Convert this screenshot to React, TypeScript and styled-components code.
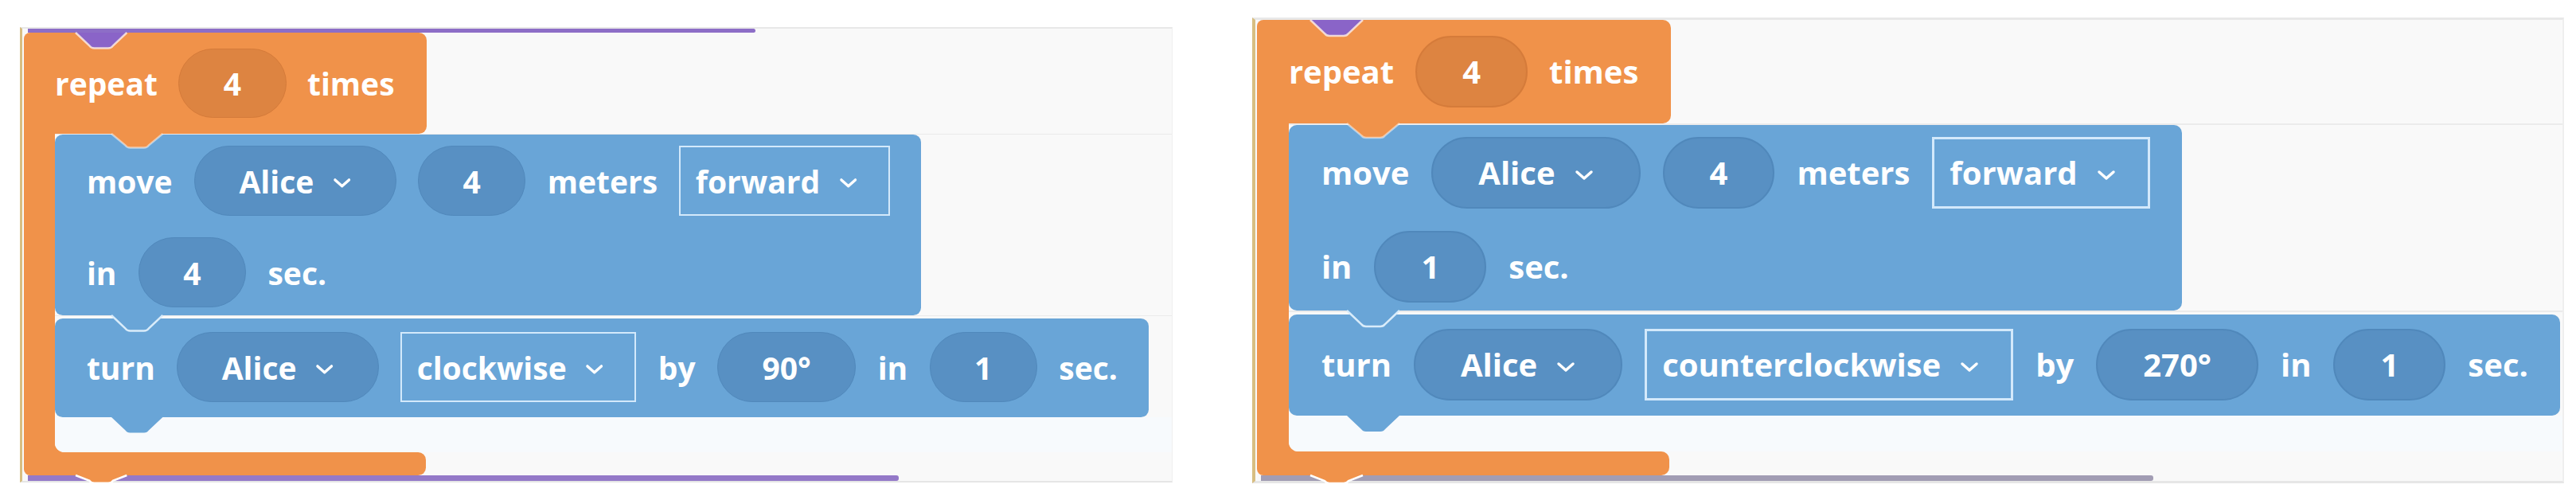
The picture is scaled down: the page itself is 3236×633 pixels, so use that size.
import React from 'react';
import styled, { createGlobalStyle } from 'styled-components';

const ORANGE = '#f0924a';
const ORANGE_DARK = '#dd8441';
const BLUE = '#69a5d7';
const BLUE_DARK = '#5890c3';
const PANEL_BG = '#f9f9f9';

const GlobalStyle = createGlobalStyle`
  html, body {
    margin: 0;
    padding: 0;
    background: #ffffff;
  }
  body {
    font-family: 'Open Sans', 'Noto Sans', sans-serif;
  }
`;

const Page = styled.div`
  display: flex;
  align-items: flex-start;
  gap: 100px;
  width: 3236px;
  height: 633px;
  padding-left: 25px;
  box-sizing: border-box;
  overflow: hidden;
`;

const Panel = styled.section<{ $scale: number; $width: number; $top: number }>`
  zoom: ${({ $scale }) => $scale};
  margin-top: ${({ $top }) => $top}px;
  width: ${({ $width }) => $width}px;
  box-sizing: border-box;
  display: flex;
  flex-direction: column;
  background: ${PANEL_BG};
  border-left: 4px solid #d8be82;
  border-top: 3px solid #e8e8e8;
  border-bottom: 3px solid #e6e6e6;
  border-right: 2px solid #efefef;
  padding-left: 2px;
`;

const EdgeStrip = styled.div<{ $width: number; $color: string; $height: number }>`
  width: ${({ $width }) => $width}px;
  height: ${({ $height }) => $height}px;
  margin-left: 5px;
  background: ${({ $color }) => $color};
  border-radius: 0 3px 3px 0;
`;

const RepeatHead = styled.div`
  position: relative;
  z-index: 3;
  align-self: flex-start;
  display: flex;
  align-items: center;
  gap: 27px;
  height: 130px;
  box-sizing: border-box;
  padding: 0 41px 0 40px;
  background: ${ORANGE};
  border-radius: 8px 10px 10px 0;
`;

const RepeatBody = styled.div`
  display: flex;
  background: ${ORANGE};
  padding-left: 40px;
`;

const Stack = styled.div`
  flex: 1;
  display: flex;
  flex-direction: column;
  background: ${PANEL_BG};
  border-bottom-left-radius: 12px;
`;

const StackRow = styled.div<{ $gap: number }>`
  display: flex;
  border-top: 2px solid #ebebeb;
  padding-top: ${({ $gap }) => $gap}px;
`;

const InnerSpace = styled.div`
  height: 45px;
  background: #f7fafd;
  border-bottom-left-radius: 12px;
`;

const RepeatFoot = styled.div`
  position: relative;
  z-index: 3;
  width: 518px;
  height: 30px;
  background: ${ORANGE};
  border-radius: 0 10px 10px 8px;
`;

const Block = styled.div<{ $pad: string }>`
  position: relative;
  display: flex;
  flex-direction: column;
  gap: 28px;
  padding: ${({ $pad }) => $pad};
  background: ${BLUE};
  border-radius: 10px;
  box-sizing: border-box;
`;

const Line = styled.div`
  display: flex;
  align-items: center;
  gap: 28px;
  height: 90px;
`;

const Label = styled.span`
  color: #ffffff;
  font-size: 40px;
  font-weight: 700;
  line-height: 1;
  white-space: nowrap;
`;

const Pill = styled.div<{ $tone: 'blue' | 'orange' }>`
  display: flex;
  align-items: center;
  gap: 24px;
  height: 90px;
  box-sizing: border-box;
  padding: 0 57px;
  border-radius: 45px;
  background: ${({ $tone }) => ($tone === 'orange' ? ORANGE_DARK : BLUE_DARK)};
  border: 2px solid ${({ $tone }) => ($tone === 'orange' ? '#d57b3a' : '#5088bb')};
`;

const Dropdown = styled.div`
  display: flex;
  align-items: center;
  gap: 24px;
  height: 90px;
  box-sizing: border-box;
  padding: 0 40px 0 19px;
  border: 3px solid #d3e9fb;
`;

const ChevronSvg = styled.svg`
  margin-top: 6px;
  flex: none;
`;

const TabSvg = styled.svg<{ $left: number; $at: 'top' | 'below' }>`
  position: absolute;
  left: ${({ $left }) => $left}px;
  ${({ $at }) => ($at === 'top' ? 'top: 0;' : 'top: 100%;')}
  z-index: 4;
  overflow: visible;
`;

const Chevron = () => (
  <ChevronSvg width="24" height="14" viewBox="0 0 24 14">
    <polyline points="3,3 12,11 21,3" fill="none" stroke="#ffffff" strokeWidth="3.5" strokeLinecap="round" strokeLinejoin="round" />
  </ChevronSvg>
);

type TabProps = { color: string; left: number; at?: 'top' | 'below'; h?: number; edge?: string };

const Tab = ({ color, left, at = 'below', h = 20, edge }: TabProps) => (
  <TabSvg $left={left} $at={at} width="66" height={h} viewBox={`0 0 66 ${h}`}>
    <path d={`M0 0 H66 L48 ${h - 3} Q46 ${h} 42 ${h} H24 Q20 ${h} 18 ${h - 3} Z`} fill={color} />
    {edge && (
      <path
        d={`M0 0 L18 ${h - 3} Q20 ${h} 24 ${h} H42 Q46 ${h} 48 ${h - 3} L66 0`}
        fill="none"
        stroke={edge}
        strokeWidth="2.5"
      />
    )}
  </TabSvg>
);

const NumPill = ({ value, tone = 'blue' }: { value: string; tone?: 'blue' | 'orange' }) => (
  <Pill $tone={tone}>
    <Label>{value}</Label>
  </Pill>
);

const ActorPill = ({ name }: { name: string }) => (
  <Pill $tone="blue">
    <Label>{name}</Label>
    <Chevron />
  </Pill>
);

const Choice = ({ value }: { value: string }) => (
  <Dropdown>
    <Label>{value}</Label>
    <Chevron />
  </Dropdown>
);

type Scene = {
  scale: number;
  width: number;
  top: number;
  prevEdge?: { width: number; color: string };
  nextEdge: { width: number; color: string };
  times: string;
  distance: string;
  moveSec: string;
  direction: string;
  angle: string;
  turnSec: string;
};

const scenes: Scene[] = [
  {
    scale: 0.975,
    width: 1485,
    top: 35,
    prevEdge: { width: 938, color: '#8d6ec7' },
    nextEdge: { width: 1122, color: '#9479c8' },
    times: '4',
    distance: '4',
    moveSec: '4',
    direction: 'clockwise',
    angle: '90°',
    turnSec: '1',
  },
  {
    scale: 1,
    width: 1648,
    top: 22,
    nextEdge: { width: 1121, color: '#a29db4' },
    times: '4',
    distance: '4',
    moveSec: '1',
    direction: 'counterclockwise',
    angle: '270°',
    turnSec: '1',
  },
];

const ProgramPanel = ({ scene }: { scene: Scene }) => (
  <Panel $scale={scene.scale} $width={scene.width} $top={scene.top}>
    {scene.prevEdge && <EdgeStrip $width={scene.prevEdge.width} $color={scene.prevEdge.color} $height={5} />}
    <RepeatHead>
      <Tab color="#8a64c8" left={67} at="top" edge="rgba(255,240,230,0.8)" />
      <Label>repeat</Label>
      <NumPill value={scene.times} tone="orange" />
      <Label>times</Label>
      <Tab color={ORANGE} left={113} h={18} edge="rgba(255,255,255,0.5)" />
    </RepeatHead>
    <RepeatBody>
      <Stack>
        <StackRow $gap={0}>
          <Block $pad="15px 40px 10px 41px">
            <Line>
              <Label>move</Label>
              <ActorPill name="Alice" />
              <NumPill value={scene.distance} />
              <Label>meters</Label>
              <Choice value="forward" />
            </Line>
            <Line>
              <Label>in</Label>
              <NumPill value={scene.moveSec} />
              <Label>sec.</Label>
            </Line>
            <Tab color={BLUE} left={73} edge="#d9ecfa" />
          </Block>
        </StackRow>
        <StackRow $gap={3}>
          <Block $pad="18px 40px 19px 41px">
            <Line>
              <Label>turn</Label>
              <ActorPill name="Alice" />
              <Choice value={scene.direction} />
              <Label>by</Label>
              <NumPill value={scene.angle} />
              <Label>in</Label>
              <NumPill value={scene.turnSec} />
              <Label>sec.</Label>
            </Line>
            <Tab color={BLUE} left={73} />
          </Block>
        </StackRow>
        <InnerSpace />
      </Stack>
    </RepeatBody>
    <RepeatFoot>
      <Tab color={ORANGE} left={67} h={10} edge="#ffffff" />
    </RepeatFoot>
    <EdgeStrip $width={scene.nextEdge.width} $color={scene.nextEdge.color} $height={7} />
  </Panel>
);

const App: React.FC = () => {
  return (
    <>
      <GlobalStyle />
      <Page>
        {scenes.map((scene, i) => (
          <ProgramPanel key={i} scene={scene} />
        ))}
      </Page>
    </>
  );
};

export default App;
